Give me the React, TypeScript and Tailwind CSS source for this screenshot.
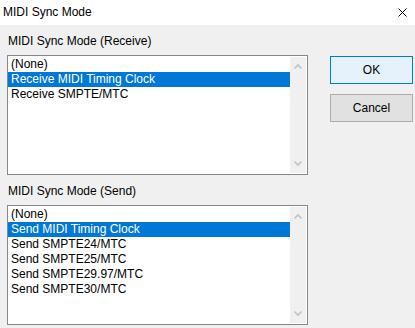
import React from "react";

const font = { fontFamily: '"Liberation Sans", Arial, sans-serif' };

function ListBox({ items, selected }: { items: string[]; selected: number }) {
  return (
    <div className="flex h-[120px] w-[301px] border border-[#828790] bg-white">
      <div className="flex-1 pt-[1px]">
        {items.map((it, i) => (
          <div
            key={i}
            className={
              "h-[15px] pl-[3px] text-[12px] leading-[15px] whitespace-nowrap " +
              (i === selected ? "bg-[#0078d7] text-white" : "text-black")
            }
          >
            {it}
          </div>
        ))}
      </div>
      <div className="my-[1px] mr-[1px] flex w-[16px] flex-col justify-between bg-[#f0f0f0]">
        <svg width="16" height="16" viewBox="0 0 16 16" className="mt-[1px]">
          <polyline points="4.5,10.5 8,7 11.5,10.5" fill="none" stroke="#c2c2c2" strokeWidth="1.6" />
        </svg>
        <svg width="16" height="16" viewBox="0 0 16 16" className="mb-[1px]">
          <polyline points="4.5,5.5 8,9 11.5,5.5" fill="none" stroke="#c2c2c2" strokeWidth="1.6" />
        </svg>
      </div>
    </div>
  );
}

export default function App() {
  return (
    <div className="flex h-[328px] w-[415px] flex-col bg-[#f0f0f0] text-black" style={font}>
      <div className="flex h-[25px] items-center justify-between bg-white pl-[3px] pr-[8px]">
        <span className="text-[12px] leading-[15px]">MIDI Sync Mode</span>
        <svg width="9" height="9" viewBox="0 0 9 9" className="mr-[0px]">
          <line x1="0.5" y1="0.5" x2="8.5" y2="8.5" stroke="#000" strokeWidth="1" />
          <line x1="8.5" y1="0.5" x2="0.5" y2="8.5" stroke="#000" strokeWidth="1" />
        </svg>
      </div>
      <div className="flex pl-[7px]">
        <div className="flex flex-col">
          <div className="mt-[9px] pl-[1px] text-[12px] leading-[15px]">MIDI Sync Mode (Receive)</div>
          <div className="mt-[6px]">
            <ListBox items={["(None)", "Receive MIDI Timing Clock", "Receive SMPTE/MTC"]} selected={1} />
          </div>
          <div className="mt-[9px] pl-[1px] text-[12px] leading-[15px]">MIDI Sync Mode (Send)</div>
          <div className="mt-[6px]">
            <ListBox
              items={[
                "(None)",
                "Send MIDI Timing Clock",
                "Send SMPTE24/MTC",
                "Send SMPTE25/MTC",
                "Send SMPTE29.97/MTC",
                "Send SMPTE30/MTC",
              ]}
              selected={1}
            />
          </div>
        </div>
        <div className="ml-[22px] mt-[31px] flex flex-col gap-[10px]">
          <div className="flex h-[28px] w-[83px] items-center justify-center border border-[#0078d7] bg-[#e5f1fb] text-[12px]">
            OK
          </div>
          <div className="flex h-[28px] w-[83px] items-center justify-center border border-[#adadad] bg-[#e1e1e1] text-[12px]">
            Cancel
          </div>
        </div>
      </div>
    </div>
  );
}
